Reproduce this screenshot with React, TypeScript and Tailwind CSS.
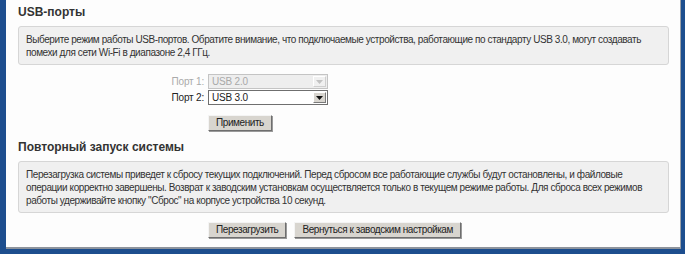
import React from "react";

const font = { fontFamily: '"Liberation Sans", Arial, sans-serif' };

function FakeSelect({ value, disabled }: { value: string; disabled?: boolean }) {
    return (
        <div
            className={`flex items-stretch w-[120px] h-[15px] border ${
                disabled ? "border-[#c4c4c4] bg-[#eeeeee] text-[#a9a9a9]" : "border-[#6f6f6f] bg-white text-[#222]"
            }`}
        >
            <div className="flex-1 pl-[3px] text-[10px] leading-[13px] tracking-[-0.2px]">{value}</div>
            <div
                className={`w-[13px] m-[1px] flex items-center justify-center border ${
                    disabled
                        ? "bg-[#f0f0f0] border-t-white border-l-white border-r-[#cfcfcf] border-b-[#cfcfcf]"
                        : "bg-[#d8d5cf] border-t-white border-l-white border-r-[#7a7a7a] border-b-[#7a7a7a]"
                }`}
            >
                <svg width="7" height="4" viewBox="0 0 7 4">
                    <path d="M0 0h7L3.5 4z" fill={disabled ? "#c2c2c2" : "#111"} />
                </svg>
            </div>
        </div>
    );
}

function Btn({ children }: { children: React.ReactNode }) {
    return (
        <button className="h-[16px] px-[7px] bg-[#d8d5cf] text-[10px] leading-[12px] tracking-[-0.42px] text-[#222] whitespace-nowrap border border-t-[#f4f4f4] border-l-[#f4f4f4] border-r-[#6e6e6e] border-b-[#6e6e6e] shadow-[1px_1px_0_#9a9a9a]">
            {children}
        </button>
    );
}

export default function App() {
    return (
        <div className="w-[685px] h-[254px] bg-[#1d4e8e] overflow-hidden pl-[6px]" style={font}>
            <div className="w-[675px] h-[249px] bg-[#fdfdfd] border-r border-b-2 border-r-[#9aa0a8] border-b-[#8d939c] pl-[12px] pr-[11px] pt-[4px] text-[#333]">
                {/* USB */}
                <h2 className="text-[12px] font-bold leading-[16px] text-[#333]">USB-порты</h2>
                <div className="mt-[6px] rounded-[3px] border border-[#d6d6d6] bg-[#f0f0f0] pl-[7px] pr-[8px] pt-[6px] pb-[5px] text-[10px] leading-[13px] tracking-[-0.42px] text-[#333] whitespace-nowrap">
                    Выберите режим работы USB-портов. Обратите внимание, что подключаемые устройства, работающие по стандарту USB 3.0, могут создавать
                    <br />
                    помехи для сети Wi-Fi в диапазоне 2,4 ГГц.
                </div>

                <div className="mt-[9px] flex flex-col gap-[1px] pl-[150px]">
                    <div className="flex items-center">
                        <span className="w-[40px] text-right pr-[4px] text-[10px] tracking-[-0.2px] whitespace-nowrap text-[#aaa]">Порт 1:</span>
                        <FakeSelect value="USB 2.0" disabled />
                    </div>
                    <div className="flex items-center">
                        <span className="w-[40px] text-right pr-[4px] text-[10px] tracking-[-0.2px] whitespace-nowrap text-[#222]">Порт 2:</span>
                        <FakeSelect value="USB 3.0" />
                    </div>
                    <div className="pl-[40px] mt-[9px] flex">
                        <Btn>Применить</Btn>
                    </div>
                </div>

                {/* Reboot */}
                <h2 className="mt-[8px] text-[12px] font-bold leading-[16px] text-[#333]">Повторный запуск системы</h2>
                <div className="mt-[6px] rounded-[3px] border border-[#d6d6d6] bg-[#f0f0f0] pl-[7px] pr-[8px] pt-[6px] pb-[5px] text-[10px] leading-[13px] tracking-[-0.42px] text-[#333] whitespace-nowrap">
                    Перезагрузка системы приведет к сбросу текущих подключений. Перед сбросом все работающие службы будут остановлены, и файловые
                    <br />
                    операции корректно завершены. Возврат к заводским установкам осуществляется только в текущем режиме работы. Для сброса всех режимов
                    <br />
                    работы удерживайте кнопку "Сброс" на корпусе устройства 10 секунд.
                </div>
                <div className="mt-[9px] flex gap-[8px] pl-[190px]">
                    <Btn>Перезагрузить</Btn>
                    <Btn>Вернуться к заводским настройкам</Btn>
                </div>
            </div>
        </div>
    );
}
